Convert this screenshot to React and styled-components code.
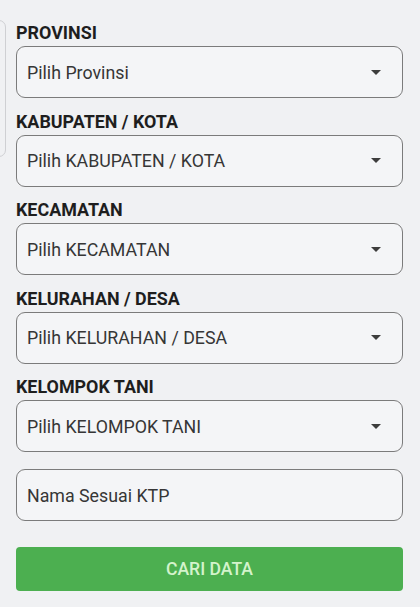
import styled, { createGlobalStyle } from "styled-components";

const GlobalStyle = createGlobalStyle`
  html, body {
    margin: 0;
    padding: 0;
    background: #f0f1f3;
  }
  body {
    font-family: Roboto, "Noto Sans", sans-serif;
  }
`;

const FIELDS = [
  { label: "PROVINSI", placeholder: "Pilih Provinsi" },
  { label: "KABUPATEN / KOTA", placeholder: "Pilih KABUPATEN / KOTA" },
  { label: "KECAMATAN", placeholder: "Pilih KECAMATAN" },
  { label: "KELURAHAN / DESA", placeholder: "Pilih KELURAHAN / DESA" },
  { label: "KELOMPOK TANI", placeholder: "Pilih KELOMPOK TANI" },
];

export default function App() {
  return (
    <>
      <GlobalStyle />
      <Page>
        <EdgeTab />
        <Form>
          {FIELDS.map((field) => (
            <Group key={field.label}>
              <Label>{field.label}</Label>
              <SelectBox>
                <Placeholder>{field.placeholder}</Placeholder>
                <Caret />
              </SelectBox>
            </Group>
          ))}

          <TextBox>
            <Placeholder>Nama Sesuai KTP</Placeholder>
          </TextBox>

          <SearchButton>CARI DATA</SearchButton>
        </Form>
      </Page>
    </>
  );
}

const Page = styled.div`
  position: relative;
  width: 420px;
  height: 607px;
  overflow: hidden;
  background: #f0f1f3;
`;

const EdgeTab = styled.div`
  position: absolute;
  left: -8px;
  top: 20px;
  width: 12px;
  height: 135px;
  border: 1px solid #cfd0d3;
  border-radius: 7px;
`;

const Form = styled.div`
  display: flex;
  flex-direction: column;
  padding: 23px 17px 0 16px;
`;

const Group = styled.div`
  display: flex;
  flex-direction: column;
  margin-bottom: 13.5px;
`;

const Label = styled.div`
  font-size: 17.9px;
  line-height: 20px;
  font-weight: 700;
  color: #1e1e1e;
  margin-bottom: 3px;
`;

const SelectBox = styled.div`
  box-sizing: border-box;
  height: 52px;
  display: flex;
  align-items: center;
  justify-content: space-between;
  padding: 0 21px 0 10px;
  border: 1px solid #7b7b7b;
  border-radius: 9px;
  background: #f4f5f7;
`;

const TextBox = styled(SelectBox)`
  margin-top: 3.5px;
`;

const Placeholder = styled.span`
  font-size: 17.8px;
  color: #363636;
`;

const Caret = styled.span`
  width: 0;
  height: 0;
  border-left: 5px solid transparent;
  border-right: 5px solid transparent;
  border-top: 5px solid #3d3d3d;
`;

const SearchButton = styled.button`
  margin-top: 26px;
  height: 44px;
  border: none;
  border-radius: 4px;
  background: #4caf50;
  color: #d4f3cc;
  font-family: Roboto, "Noto Sans", sans-serif;
  font-size: 17.6px;
  font-weight: 500;
  cursor: pointer;
`;
